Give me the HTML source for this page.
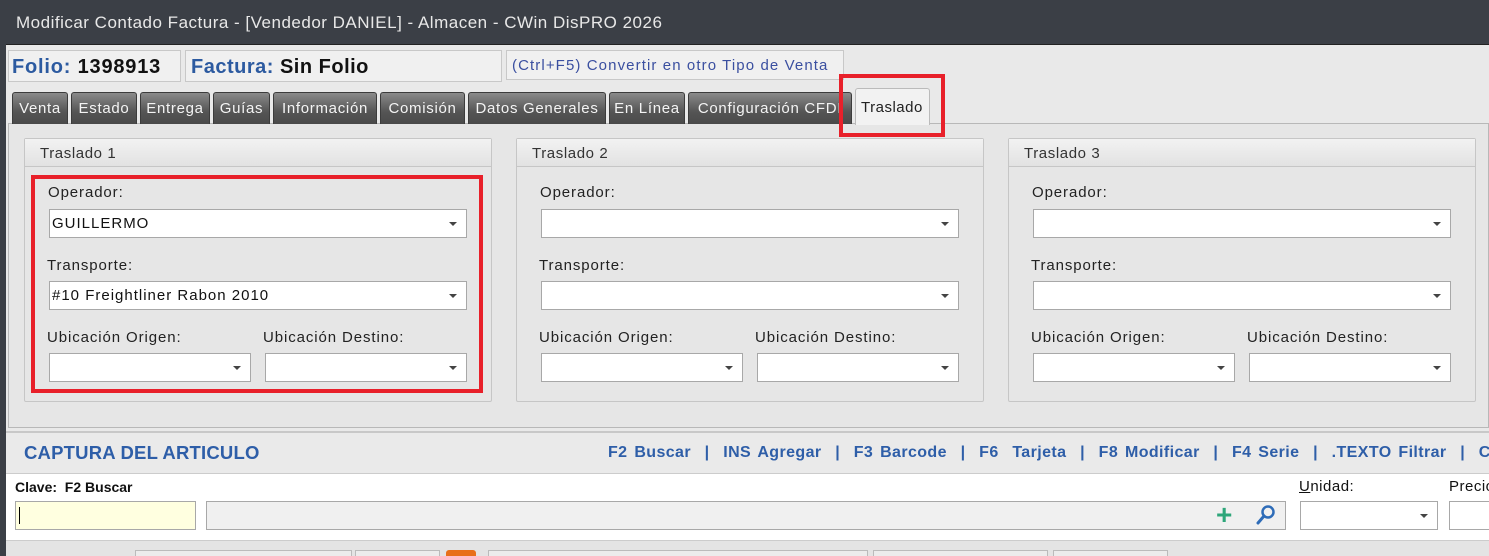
<!DOCTYPE html>
<html><head><meta charset="utf-8"><style>
*{box-sizing:border-box;margin:0;padding:0}
body{width:1489px;height:556px;overflow:hidden;background:#e9e9e9;font-family:"Liberation Sans","DejaVu Sans",sans-serif;position:relative}
.a{position:absolute}
.title{left:0;top:0;width:1489px;height:45px;background:#3b3f46;color:#e8e8e8;font-size:17px;letter-spacing:0.5px;padding:13px 0 0 16px;border-bottom:1px solid #222;white-space:nowrap}
.lb{left:0;top:0;width:6px;height:556px;background:#3b3f46}
.box{background:#f0f0f0;border:1px solid #c8c8c8;white-space:nowrap}
.tab{top:92px;height:32px;background:linear-gradient(#8a8a8a,#555 60%,#4a4a4a);color:#f4f4f4;font-size:15px;letter-spacing:0.7px;text-align:center;padding-top:7px;border:1px solid #3c3c3c;border-bottom:none;border-radius:3px 3px 0 0;white-space:nowrap;overflow:hidden}
.grp{top:138px;width:468px;height:264px;border:1px solid #c6c6c6;background:#e6e6e6;border-radius:2px}
.gh{left:0;top:0;right:0;height:28px;background:linear-gradient(#f2f2f2,#e2e2e2);border-bottom:1px solid #c6c6c6;color:#333;font-size:15px;letter-spacing:0.6px;padding:6px 0 0 15px;position:absolute}
.lab{font-size:15px;letter-spacing:0.9px;color:#222;white-space:nowrap}
.inp{background:#fff;border:1px solid #a8a8a8;height:29px;font-size:15px;letter-spacing:1px;color:#111;padding:5px 0 0 2px;white-space:nowrap}
.arr{position:absolute;right:9px;top:12px;width:0;height:0;border-left:4px solid transparent;border-right:4px solid transparent;border-top:4px solid #444}
.red{border:4px solid #e8202a}
.fk{color:#2e5ea8;font-weight:bold;font-size:16px;letter-spacing:0.4px}
</style></head><body>
<div class="a title">Modificar Contado Factura - [Vendedor DANIEL] - Almacen - CWin DisPRO 2026</div>
<div class="a lb"></div>
<div class="a box" style="left:8px;top:50px;width:173px;height:32px;font-size:20px;letter-spacing:0.8px;font-weight:bold;padding:5px 0 0 3px"><span style="color:#2c5aa0">Folio:</span> <span style="color:#111">1398913</span></div>
<div class="a box" style="left:185px;top:50px;width:317px;height:32px;font-size:20px;letter-spacing:0.5px;font-weight:bold;padding:5px 0 0 5px"><span style="color:#2c5aa0">Factura:</span> <span style="color:#111">Sin Folio</span></div>
<div class="a box" style="left:506px;top:50px;width:338px;height:30px;font-size:15px;letter-spacing:1.1px;color:#3a4fa0;padding:6px 0 0 5px">(Ctrl+F5) Convertir en otro Tipo de Venta</div>
<div class="a" style="left:8px;top:123px;width:1481px;height:305px;border:1px solid #b8b8b8;background:#e6e6e6"></div>
<div class="a tab" style="left:12px;width:56px">Venta</div>
<div class="a tab" style="left:71px;width:66px">Estado</div>
<div class="a tab" style="left:140px;width:70px">Entrega</div>
<div class="a tab" style="left:213px;width:57px">Guías</div>
<div class="a tab" style="left:273px;width:104px">Información</div>
<div class="a tab" style="left:380px;width:85px">Comisión</div>
<div class="a tab" style="left:468px;width:138px">Datos Generales</div>
<div class="a tab" style="left:609px;width:76px">En Línea</div>
<div class="a tab" style="left:688px;width:164px">Configuración CFDI</div>
<div class="a" style="left:855px;top:88px;width:75px;height:37px;background:#f2f2f2;border:1px solid #bbb;border-bottom:none;border-radius:3px 3px 0 0;font-size:15px;letter-spacing:0.5px;color:#222;padding:10px 0 0 5px">Traslado</div>
<div class="a red" style="left:839px;top:74px;width:106px;height:63px"></div>

<div class="a grp" style="left:24px"><div class="gh">Traslado 1</div>
<div class="a lab" style="left:23px;top:45px">Operador:</div>
<div class="a inp" style="left:24px;top:70px;width:418px">GUILLERMO<span class="arr"></span></div>
<div class="a lab" style="left:22px;top:118px">Transporte:</div>
<div class="a inp" style="left:24px;top:142px;width:418px">#10 Freightliner Rabon 2010<span class="arr"></span></div>
<div class="a lab" style="left:22px;top:190px">Ubicación Origen:</div>
<div class="a lab" style="left:238px;top:190px">Ubicación Destino:</div>
<div class="a inp" style="left:24px;top:214px;width:202px"><span class="arr"></span></div>
<div class="a inp" style="left:240px;top:214px;width:202px"><span class="arr"></span></div>
</div>
<div class="a red" style="left:31px;top:175px;width:452px;height:218px"></div>

<div class="a grp" style="left:516px"><div class="gh">Traslado 2</div>
<div class="a lab" style="left:23px;top:45px">Operador:</div>
<div class="a inp" style="left:24px;top:70px;width:418px"><span class="arr"></span></div>
<div class="a lab" style="left:22px;top:118px">Transporte:</div>
<div class="a inp" style="left:24px;top:142px;width:418px"><span class="arr"></span></div>
<div class="a lab" style="left:22px;top:190px">Ubicación Origen:</div>
<div class="a lab" style="left:238px;top:190px">Ubicación Destino:</div>
<div class="a inp" style="left:24px;top:214px;width:202px"><span class="arr"></span></div>
<div class="a inp" style="left:240px;top:214px;width:202px"><span class="arr"></span></div>
</div>
<div class="a grp" style="left:1008px"><div class="gh">Traslado 3</div>
<div class="a lab" style="left:23px;top:45px">Operador:</div>
<div class="a inp" style="left:24px;top:70px;width:418px"><span class="arr"></span></div>
<div class="a lab" style="left:22px;top:118px">Transporte:</div>
<div class="a inp" style="left:24px;top:142px;width:418px"><span class="arr"></span></div>
<div class="a lab" style="left:22px;top:190px">Ubicación Origen:</div>
<div class="a lab" style="left:238px;top:190px">Ubicación Destino:</div>
<div class="a inp" style="left:24px;top:214px;width:202px"><span class="arr"></span></div>
<div class="a inp" style="left:240px;top:214px;width:202px"><span class="arr"></span></div>
</div>

<div class="a" style="left:6px;top:431px;width:1483px;height:43px;background:#eaeaea;border-top:2px solid #c8c8c8;border-bottom:1px solid #ccc"></div>
<div class="a" style="left:24px;top:442px;font-size:18.5px;letter-spacing:0.2px;font-weight:bold;color:#2e5ea8">CAPTURA DEL ARTICULO</div>
<div class="a fk" style="left:608px;top:444px;white-space:nowrap;word-spacing:2px">F2 Buscar &nbsp;| &nbsp;INS Agregar &nbsp;| &nbsp;F3 Barcode &nbsp;| &nbsp;F6 &nbsp;Tarjeta &nbsp;| &nbsp;F8 Modificar &nbsp;| &nbsp;F4 Serie &nbsp;| &nbsp;.TEXTO Filtrar &nbsp;| &nbsp;CAMBIAR</div>
<div class="a" style="left:6px;top:474px;width:1483px;height:66px;background:#fff"></div>
<div class="a" style="left:15px;top:479px;font-size:14px;font-weight:bold;color:#111">Clave: &nbsp;F2 Buscar</div>
<div class="a" style="left:15px;top:501px;width:181px;height:29px;background:#ffffe0;border:1px solid #a8a8a8"><div style="position:absolute;left:3px;top:5px;width:1px;height:17px;background:#000"></div></div>
<div class="a" style="left:206px;top:501px;width:1080px;height:29px;background:#f0f0f0;border:1px solid #a8a8a8"></div>
<div class="a" style="left:1216px;top:505px;font-size:28px;line-height:20px;color:#2ea67a;font-weight:bold">+</div>
<svg class="a" style="left:1254px;top:503px" width="24" height="24" viewBox="0 0 24 24"><circle cx="14" cy="9" r="5.5" fill="none" stroke="#2e6cb8" stroke-width="2.5"/><line x1="10" y1="13" x2="4" y2="20" stroke="#2e6cb8" stroke-width="3" stroke-linecap="round"/></svg>
<div class="a" style="left:1299px;top:478px;font-size:15px;letter-spacing:0.5px;color:#111"><u>U</u>nidad:</div>
<div class="a inp" style="left:1300px;top:501px;width:138px;height:29px"><span class="arr"></span></div>
<div class="a" style="left:1449px;top:478px;font-size:15px;letter-spacing:0.5px;color:#111">Precio</div>
<div class="a inp" style="left:1449px;top:501px;width:60px;height:29px"></div>
<div class="a" style="left:6px;top:540px;width:1483px;height:16px;background:#e4e4e4;border-top:1px solid #ccc"></div>
<div class="a" style="left:135px;top:550px;width:217px;height:6px;border:1px solid #bbb;border-bottom:none;background:#ececec"></div>
<div class="a" style="left:355px;top:550px;width:85px;height:6px;border:1px solid #bbb;border-bottom:none;background:#ececec"></div>
<div class="a" style="left:446px;top:550px;width:30px;height:6px;background:#e8701a;border-radius:3px 3px 0 0"></div>
<div class="a" style="left:488px;top:550px;width:380px;height:6px;border:1px solid #bbb;border-bottom:none;background:#ececec"></div>
<div class="a" style="left:873px;top:550px;width:175px;height:6px;border:1px solid #bbb;border-bottom:none;background:#ececec"></div>
<div class="a" style="left:1053px;top:550px;width:115px;height:6px;border:1px solid #bbb;border-bottom:none;background:#ececec"></div>
</body></html>
